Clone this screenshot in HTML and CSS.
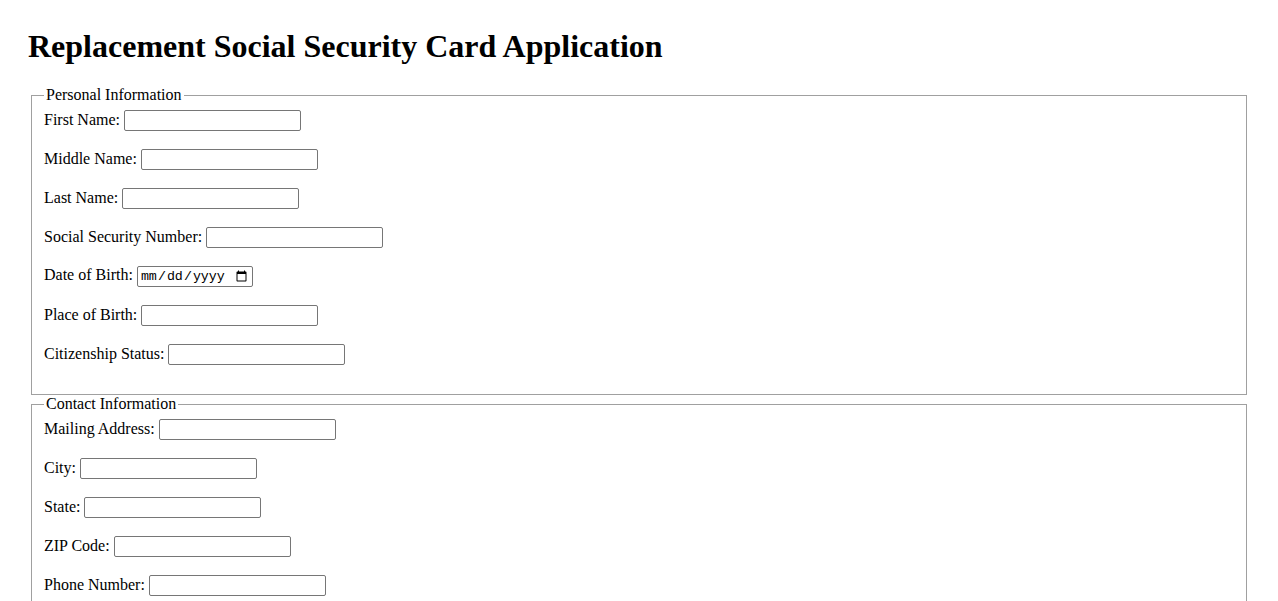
FILE: index.html
```html
<!DOCTYPE html>
<html lang="en">
<head>
    <meta charset="UTF-8" />
    <meta name="viewport" content="width=device-width, initial-scale=1.0"/>
    <title>Replacement Social Security Card Application</title>
    <link rel="stylesheet" href="styles.css">
</head>
<body>

    <h1>Replacement Social Security Card Application</h1>

    <form id="ssnForm">
        <!-- Personal Information -->
        <fieldset>
            <legend>Personal Information</legend>
            <div class="form-group">
                <label for="firstName">First Name:</label>
                <input type="text" id="firstName" name="firstName" />
            </div>
            <div class="form-group">
                <label for="middleName">Middle Name:</label>
                <input type="text" id="middleName" name="middleName" />
            </div>
            <div class="form-group">
                <label for="lastName">Last Name:</label>
                <input type="text" id="lastName" name="lastName" />
            </div>
            <div class="form-group">
                <label for="ssn">Social Security Number:</label>
                <input type="text" id="ssn" name="ssn" />
            </div>
            <div class="form-group">
                <label for="dob">Date of Birth:</label>
                <input type="date" id="dob" name="dob" />
            </div>
            <div class="form-group">
                <label for="pob">Place of Birth:</label>
                <input type="text" id="pob" name="pob" />
            </div>
            <div class="form-group">
                <label for="citizenship">Citizenship Status:</label>
                <input type="text" id="citizenship" name="citizenship" />
            </div>
        </fieldset>

        <!-- Contact Information -->
        <fieldset>
            <legend>Contact Information</legend>
            <div class="form-group">
                <label for="address">Mailing Address:</label>
                <input type="text" id="address" name="address" />
            </div>
            <div class="form-group">
                <label for="city">City:</label>
                <input type="text" id="city" name="city" />
            </div>
            <div class="form-group">
                <label for="state">State:</label>
                <input type="text" id="state" name="state" />
            </div>
            <div class="form-group">
                <label for="zip">ZIP Code:</label>
                <input type="text" id="zip" name="zip" />
            </div>
            <div class="form-group">
                <label for="phone">Phone Number:</label>
                <input type="text" id="phone" name="phone" />
            </div>
            <div class="form-group">
                <label for="email">Email Address:</label>
                <input type="text" id="email" name="email" />
            </div>
        </fieldset>
    </form>

</body>
</html>
```

FILE: styles.css
```css
body {
    font-family: 'Liberation Serif', 'Times New Roman', serif;
    font-size: 16px;
    color: #000;
    margin: 0;
    padding: 28px 29px 28px 29px;
}

h1 {
    font-size: 32px;
    margin: 0 0 21px -1px;
}

fieldset {
    margin: 0 2px;
    padding: 6px 12px 11px;
    border: 1px solid #a0a0a0;
}

legend {
    padding: 0 2px;
}

.form-group {
    margin-bottom: 18px;
}

input[type="text"] {
    width: 177px;
    height: 21px;
    box-sizing: border-box;
    padding: 1px 2px;
    border: 1px solid #767676;
    border-radius: 2px;
    font-family: 'Liberation Sans', Arial, sans-serif;
    font-size: 13.33px;
    vertical-align: baseline;
}

input[type="date"] {
    width: 116px;
    height: 21px;
    box-sizing: border-box;
    padding: 1px 2px;
    border: 1px solid #767676;
    border-radius: 2px;
    font-family: 'Liberation Mono', 'Courier New', monospace;
    font-size: 13.33px;
}
```
